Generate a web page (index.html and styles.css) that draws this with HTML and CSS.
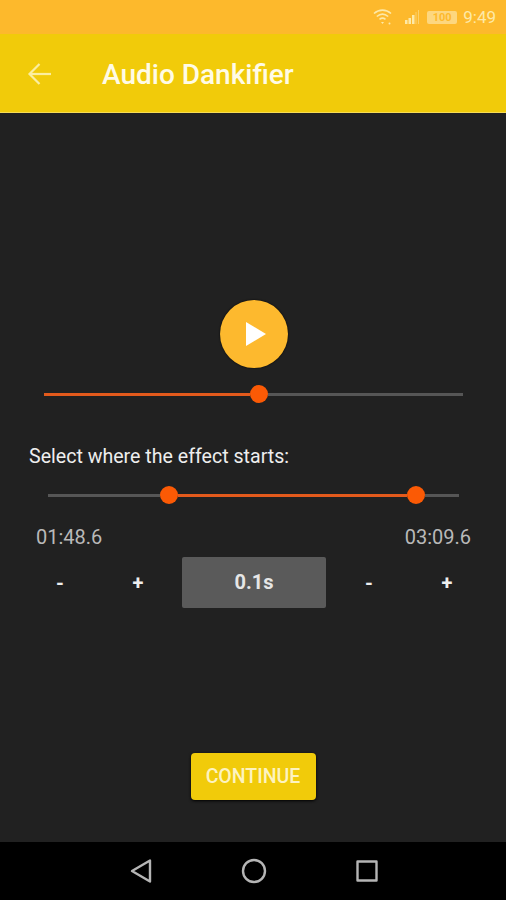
FILE: index.html
```html
<!DOCTYPE html>
<html lang="en">
<head>
  <meta charset="UTF-8" />
  <meta name="viewport" content="width=device-width, initial-scale=1.0" />
  <title>Audio Dankifier</title>
  <link rel="stylesheet" href="styles.css">
</head>
<body>
  <div class="status-bar">
    <svg class="wifi" width="20" height="18" viewBox="0 0 20 18" fill="none" stroke="currentColor" stroke-width="1.6">
      <path d="M1 5.500C6 1 13 1 18 5.500" />
      <path d="M3.800 8.500C7.300 5.500 11.700 5.500 15.200 8.500" />
      <path d="M6.500 11.300C8.300 9.900 10.700 9.900 12.500 11.300" />
      <path d="M8 14h3l-1.500 2z" fill="currentColor" stroke="none" />
      <circle cx="16.500" cy="15.500" r="1" fill="currentColor" stroke="none" />
    </svg>
    <svg class="signal" width="16" height="14" viewBox="0 0 16 14" fill="currentColor">
      <rect x="0" y="10" width="2.500" height="4" />
      <rect x="3.500" y="8" width="2.500" height="6" />
      <rect x="7" y="5" width="2.500" height="9" />
      <rect x="10.500" y="2" width="1" height="12" opacity="0.5" />
      <rect x="13" y="0" width="1" height="14" opacity="0.5" />
    </svg>
    <div class="battery">100</div>
    <span class="clock">9:49</span>
  </div>

  <header class="toolbar">
    <svg class="back" width="26" height="24" viewBox="0 0 26 24" fill="none" stroke="currentColor" stroke-width="2.200">
      <path d="M24 12H3" />
      <path d="M12.500 2L2.500 12l10 10" />
    </svg>
    <h1 class="title">Audio Dankifier</h1>
  </header>

  <main class="content">
    <button class="play">
      <svg width="20" height="24" viewBox="0 0 20 24"><path d="M0 0l20 12L0 24z" fill="#fff" /></svg>
    </button>

    <div class="slider seek">
      <div class="fill"></div>
      <div class="thumb"></div>
      <div class="rest"></div>
    </div>

    <p class="label">Select where the effect starts:</p>

    <div class="slider range">
      <div class="rest left"></div>
      <div class="thumb"></div>
      <div class="fill"></div>
      <div class="thumb"></div>
      <div class="rest right"></div>
    </div>

    <div class="times">
      <span>01:48.6</span>
      <span>03:09.6</span>
    </div>

    <div class="stepper">
      <div class="step-group">
        <div class="step">-</div>
        <div class="step">+</div>
      </div>
      <div class="amount">0.1s</div>
      <div class="step-group">
        <div class="step">-</div>
        <div class="step">+</div>
      </div>
    </div>

    <button class="continue">CONTINUE</button>
  </main>

  <nav class="nav-bar">
    <svg width="24" height="26" viewBox="0 0 24 26" fill="none" stroke="#b5b5b5" stroke-width="2.400" stroke-linejoin="round">
      <path d="M21 2.500v21L3 13z" />
    </svg>
    <svg width="26" height="26" viewBox="0 0 26 26" fill="none" stroke="#b5b5b5" stroke-width="2.400">
      <circle cx="13" cy="13" r="11" />
    </svg>
    <svg width="24" height="24" viewBox="0 0 24 24" fill="none" stroke="#b5b5b5" stroke-width="2.400" stroke-linejoin="round">
      <rect x="2.500" y="2.500" width="19" height="19" />
    </svg>
  </nav>
</body>
</html>
```

FILE: styles.css
```css
* {
  box-sizing: border-box;
}
body {
  margin: 0;
  width: 506px;
  height: 900px;
  overflow: hidden;
  display: flex;
  flex-direction: column;
  font-family: Roboto, "Liberation Sans", sans-serif;
  background: #212121;
  color: #fff;
}

.status-bar {
  height: 34px;
  flex: none;
  display: flex;
  align-items: center;
  justify-content: flex-end;
  padding-right: 10px;
  background: #fdb92c;
  color: #fde9a8;
}
.wifi {
  margin-right: 12px;
}
.signal {
  margin-right: 6px;
}
.battery {
  width: 30px;
  height: 13px;
  margin-right: 6px;
  border-radius: 2px;
  background: #fdd77f;
  color: #fdb92c;
  font-size: 11px;
  font-weight: 700;
  line-height: 13px;
  text-align: center;
}
.clock {
  font-size: 17px;
}

.toolbar {
  height: 79px;
  flex: none;
  display: flex;
  align-items: center;
  padding: 2px 0 0 27px;
  background: #f1cb0a;
  border-bottom: 1px solid #f7dc55;
}
.back {
  color: #fbeea0;
}
.title {
  margin: 0 0 0 49px;
  font-size: 28px;
  font-weight: 500;
  color: #fffbe6;
}

.content {
  flex: 1;
  display: flex;
  flex-direction: column;
  align-items: center;
  padding-top: 187px;
}
.play {
  width: 68px;
  height: 68px;
  margin-left: 2px;
  display: flex;
  align-items: center;
  justify-content: center;
  padding: 0 0 0 4px;
  border: none;
  border-radius: 50%;
  background: #fdb92e;
  box-shadow: 0 0 2px #000;
}

.slider {
  display: flex;
  align-items: center;
  height: 18px;
}
.thumb {
  width: 18px;
  height: 18px;
  flex: none;
  border-radius: 50%;
  background: #fb5a05;
}
.fill {
  height: 3px;
  background: #e35a1c;
}
.rest {
  height: 3px;
  background: #565656;
}
.seek {
  width: 419px;
  margin-top: 17px;
}
.seek .fill {
  width: 206px;
}
.seek .rest {
  flex: 1;
}
.range {
  width: 411px;
  margin-top: 18px;
}
.range .left {
  width: 112px;
}
.range .fill {
  width: 229px;
}
.range .right {
  flex: 1;
}

.label {
  align-self: flex-start;
  margin: 43px 0 0 29px;
  font-size: 19.6px;
  line-height: 22px;
  color: #eeeeee;
}
.times {
  width: 435px;
  margin: 22px 0 0 1px;
  display: flex;
  justify-content: space-between;
  font-size: 20px;
  line-height: 22px;
  color: #b9b9b9;
}
.stepper {
  width: 465px;
  margin: 9px 0 0 1px;
  display: flex;
  align-items: center;
}
.step-group {
  width: 156px;
  display: flex;
}
.step {
  width: 78px;
  font-size: 20px;
  font-weight: 700;
  text-align: center;
  color: #eeeeee;
}
.amount {
  width: 144px;
  height: 51px;
  margin: 0 4px 0 5px;
  border-radius: 2px;
  background: #5a5a5a;
  font-size: 20px;
  font-weight: 700;
  line-height: 51px;
  text-align: center;
  color: #e6e6e6;
}
.continue {
  width: 125px;
  height: 47px;
  margin-top: 145px;
  padding: 0;
  border: none;
  border-radius: 4px;
  background: #f1cb0a;
  box-shadow: 0 1px 3px #000;
  font-family: inherit;
  font-size: 19.5px;
  font-weight: 500;
  color: #fdf3c0;
}

.nav-bar {
  height: 58px;
  flex: none;
  display: flex;
  align-items: center;
  justify-content: center;
  gap: 88px;
  padding-left: 2px;
  background: #000;
}
```
